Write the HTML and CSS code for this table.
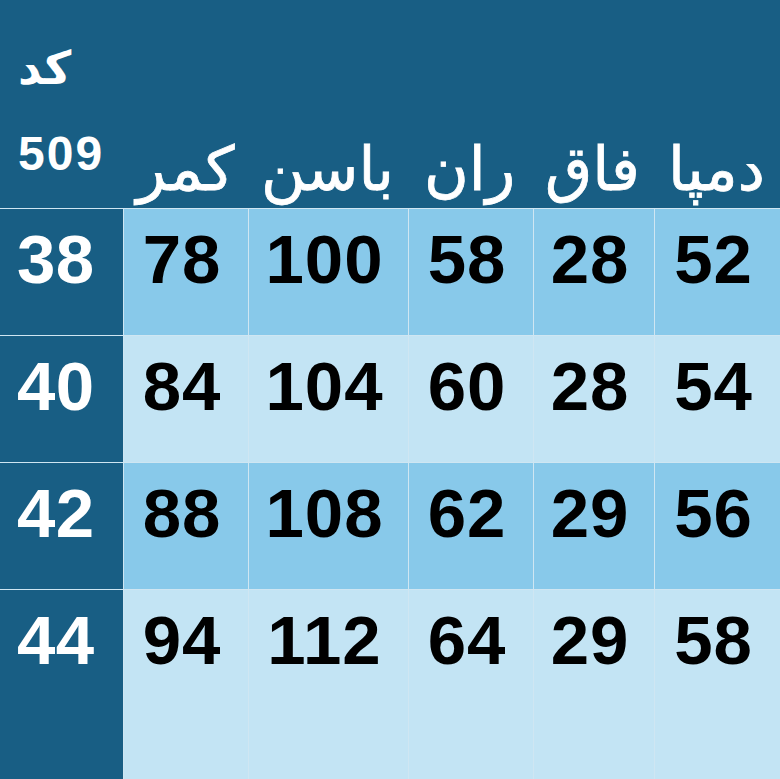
FILE: index.html
```html
<!DOCTYPE html>
<html lang="fa">
<head>
<meta charset="utf-8">
<link rel="stylesheet" href="styles.css">
</head>
<body>
<div class="sheet">
  <div class="head">
    <div class="code">
      <div class="code-label">کد</div>
      <div class="code-num">509</div>
    </div>
    <div class="label">کمر</div>
    <div class="label">باسن</div>
    <div class="label">ران</div>
    <div class="label">فاق</div>
    <div class="label">دمپا</div>
  </div>
  <div class="table">
    <div class="size">38</div><div class="c a">78</div><div class="c a">100</div><div class="c a">58</div><div class="c a">28</div><div class="c a">52</div>
    <div class="size">40</div><div class="c b">84</div><div class="c b">104</div><div class="c b">60</div><div class="c b">28</div><div class="c b">54</div>
    <div class="size">42</div><div class="c a">88</div><div class="c a">108</div><div class="c a">62</div><div class="c a">29</div><div class="c a">56</div>
    <div class="size">44</div><div class="c b">94</div><div class="c b">112</div><div class="c b">64</div><div class="c b">29</div><div class="c b">58</div>
  </div>
</div>
</body>
</html>
```
FILE: styles.css
```css
html, body {
  margin: 0;
  padding: 0;
  background: #185e84;
}
.sheet {
  width: 780px;
  height: 779px;
  background: #185e84;
  display: flex;
  flex-direction: column;
  overflow: hidden;
  font-family: "Liberation Sans", Arial, sans-serif;
}
.head {
  height: 208px;
  display: grid;
  grid-template-columns: 123px 125px 159px 125px 121px 127px;
  color: #fff;
}
.code {
  padding-left: 18px;
  display: flex;
  flex-direction: column;
}
.code-label {
  font-family: "DejaVu Sans", sans-serif;
  font-weight: bold;
  font-size: 46px;
  line-height: 1;
  margin-top: 45px;
  direction: rtl;
  text-align: left;
}
.code-num {
  font-weight: bold;
  font-size: 48px;
  letter-spacing: 2px;
  line-height: 1;
  margin-top: 39px;
}
.label {
  font-family: "DejaVu Sans", sans-serif;
  font-size: 61px;
  -webkit-text-stroke: 0.8px #fff;
  direction: rtl;
  align-self: end;
  text-align: center;
  line-height: 1;
  padding-bottom: 9px;
  white-space: nowrap;
}
.table {
  flex: 1;
  display: grid;
  grid-template-columns: 123px 124px 159px 124px 120px 125px;
  grid-template-rows: 126px 126px 126px 1fr;
  gap: 1px;
  background: #cfe6f2;
  border-top: 1px solid #cfe6f2;
}
.size {
  background: #185e84;
  color: #fff;
  font-weight: bold;
  font-size: 69px;
  letter-spacing: 0.5px;
  line-height: 1;
  padding: 16px 0 0 17px;
}
.c {
  color: #000;
  font-weight: bold;
  font-size: 69px;
  letter-spacing: 1px;
  line-height: 1;
  padding-top: 16px;
  text-align: center;
  padding-right: 8px;
}
.a { background: #88c9ea; }
.b { background: #c3e4f4; }
```
